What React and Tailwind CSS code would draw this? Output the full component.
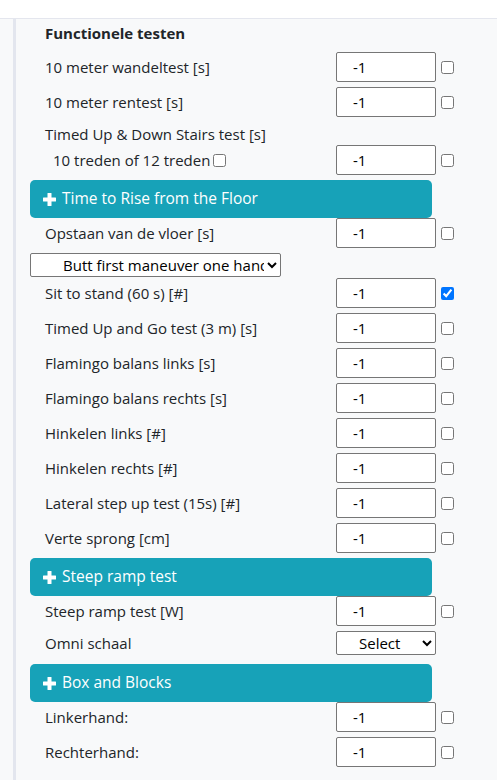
import React from 'react';

const font = { fontFamily: '"Open Sans", "Noto Sans", sans-serif' };

const Check = ({ checked }) => (
  <input type="checkbox" defaultChecked={checked} className="ml-[5px] w-[13px] h-[13px] m-0 accent-[#0075ff]" />
);

const NumInput = () => (
  <input
    type="text"
    defaultValue="-1"
    className="w-[100px] h-[30px] bg-white border border-[#767676] rounded-[2px] pl-[16px] text-[15px] text-black outline-none"
  />
);

const Row = ({ label, checked, className = 'mb-[5px]' }) => (
  <div className={`flex items-center h-[30px] ${className}`}>
    <div className="w-[306px] pl-[15px] text-[15px] text-[#212529]">{label}</div>
    <NumInput />
    <Check checked={checked} />
  </div>
);

const Bar = ({ title }) => (
  <div className="w-[402px] h-[38px] bg-[#17a2b8] rounded-[5px] flex items-center pl-[13px] text-white text-[15.5px]">
    <svg width="13" height="13" viewBox="0 0 13 13" className="mr-[6px]">
      <rect x="4.5" y="0" width="4" height="13" rx="0.5" fill="white" />
      <rect x="0" y="4.5" width="13" height="4" rx="0.5" fill="white" />
    </svg>
    <span>{title}</span>
  </div>
);

export default function App() {
  return (
    <div style={font} className="min-h-[780px] bg-white">
      <div className="h-[19px] bg-white border-b border-[#e4e6ee]" />
      <div className="bg-[#f8f9fa] pl-[13px] min-h-[761px]">
        <div className="border-l-[3px] border-[#e3e6ee] pl-[14px] pt-[1px] pb-[10px] min-h-[761px]">
          <div className="h-[27px] flex items-center pl-[15px] text-[15px] font-bold text-[#212529] mb-[5px]">
            Functionele testen
          </div>
          <Row label="10 meter wandeltest [s]" />
          <Row label="10 meter rentest [s]" />
          <div className="h-[23px] flex items-center pl-[15px] text-[15px] text-[#212529] pt-[2px]">
            Timed Up &amp; Down Stairs test [s]
          </div>
          <div className="flex items-center h-[30px] mb-[5px]">
            <div className="w-[306px] pl-[23px] text-[15px] text-[#212529] flex items-center">
              10 treden of 12 treden
              <input type="checkbox" className="ml-[3px] w-[13px] h-[13px] m-0" />
            </div>
            <NumInput />
            <Check />
          </div>
          <Bar title="Time to Rise from the Floor" />
          <Row label="Opstaan van de vloer [s]" />
          <select className="w-[251px] h-[24px] bg-white border border-[#767676] rounded-[2px] pl-[28px] text-[15px] text-black mb-[1px] block">
            <option>Butt first maneuver one hand</option>
          </select>
          <Row label="Sit to stand (60 s) [#]" checked />
          <Row label="Timed Up and Go test (3 m) [s]" />
          <Row label="Flamingo balans links [s]" />
          <Row label="Flamingo balans rechts [s]" />
          <Row label="Hinkelen links [#]" />
          <Row label="Hinkelen rechts [#]" />
          <Row label="Lateral step up test (15s) [#]" />
          <Row label="Verte sprong [cm]" />
          <Bar title="Steep ramp test" />
          <Row label="Steep ramp test [W]" />
          <div className="flex items-center h-[24px] mb-[9px]">
            <div className="w-[306px] pl-[15px] text-[15px] text-[#212529]">Omni schaal</div>
            <select className="w-[100px] h-[24px] bg-white border border-[#767676] rounded-[2px] pl-[18px] text-[15px] text-black">
              <option>Select</option>
            </select>
          </div>
          <Bar title="Box and Blocks" />
          <Row label="Linkerhand:" />
          <Row label="Rechterhand:" />
        </div>
      </div>
    </div>
  );
}
